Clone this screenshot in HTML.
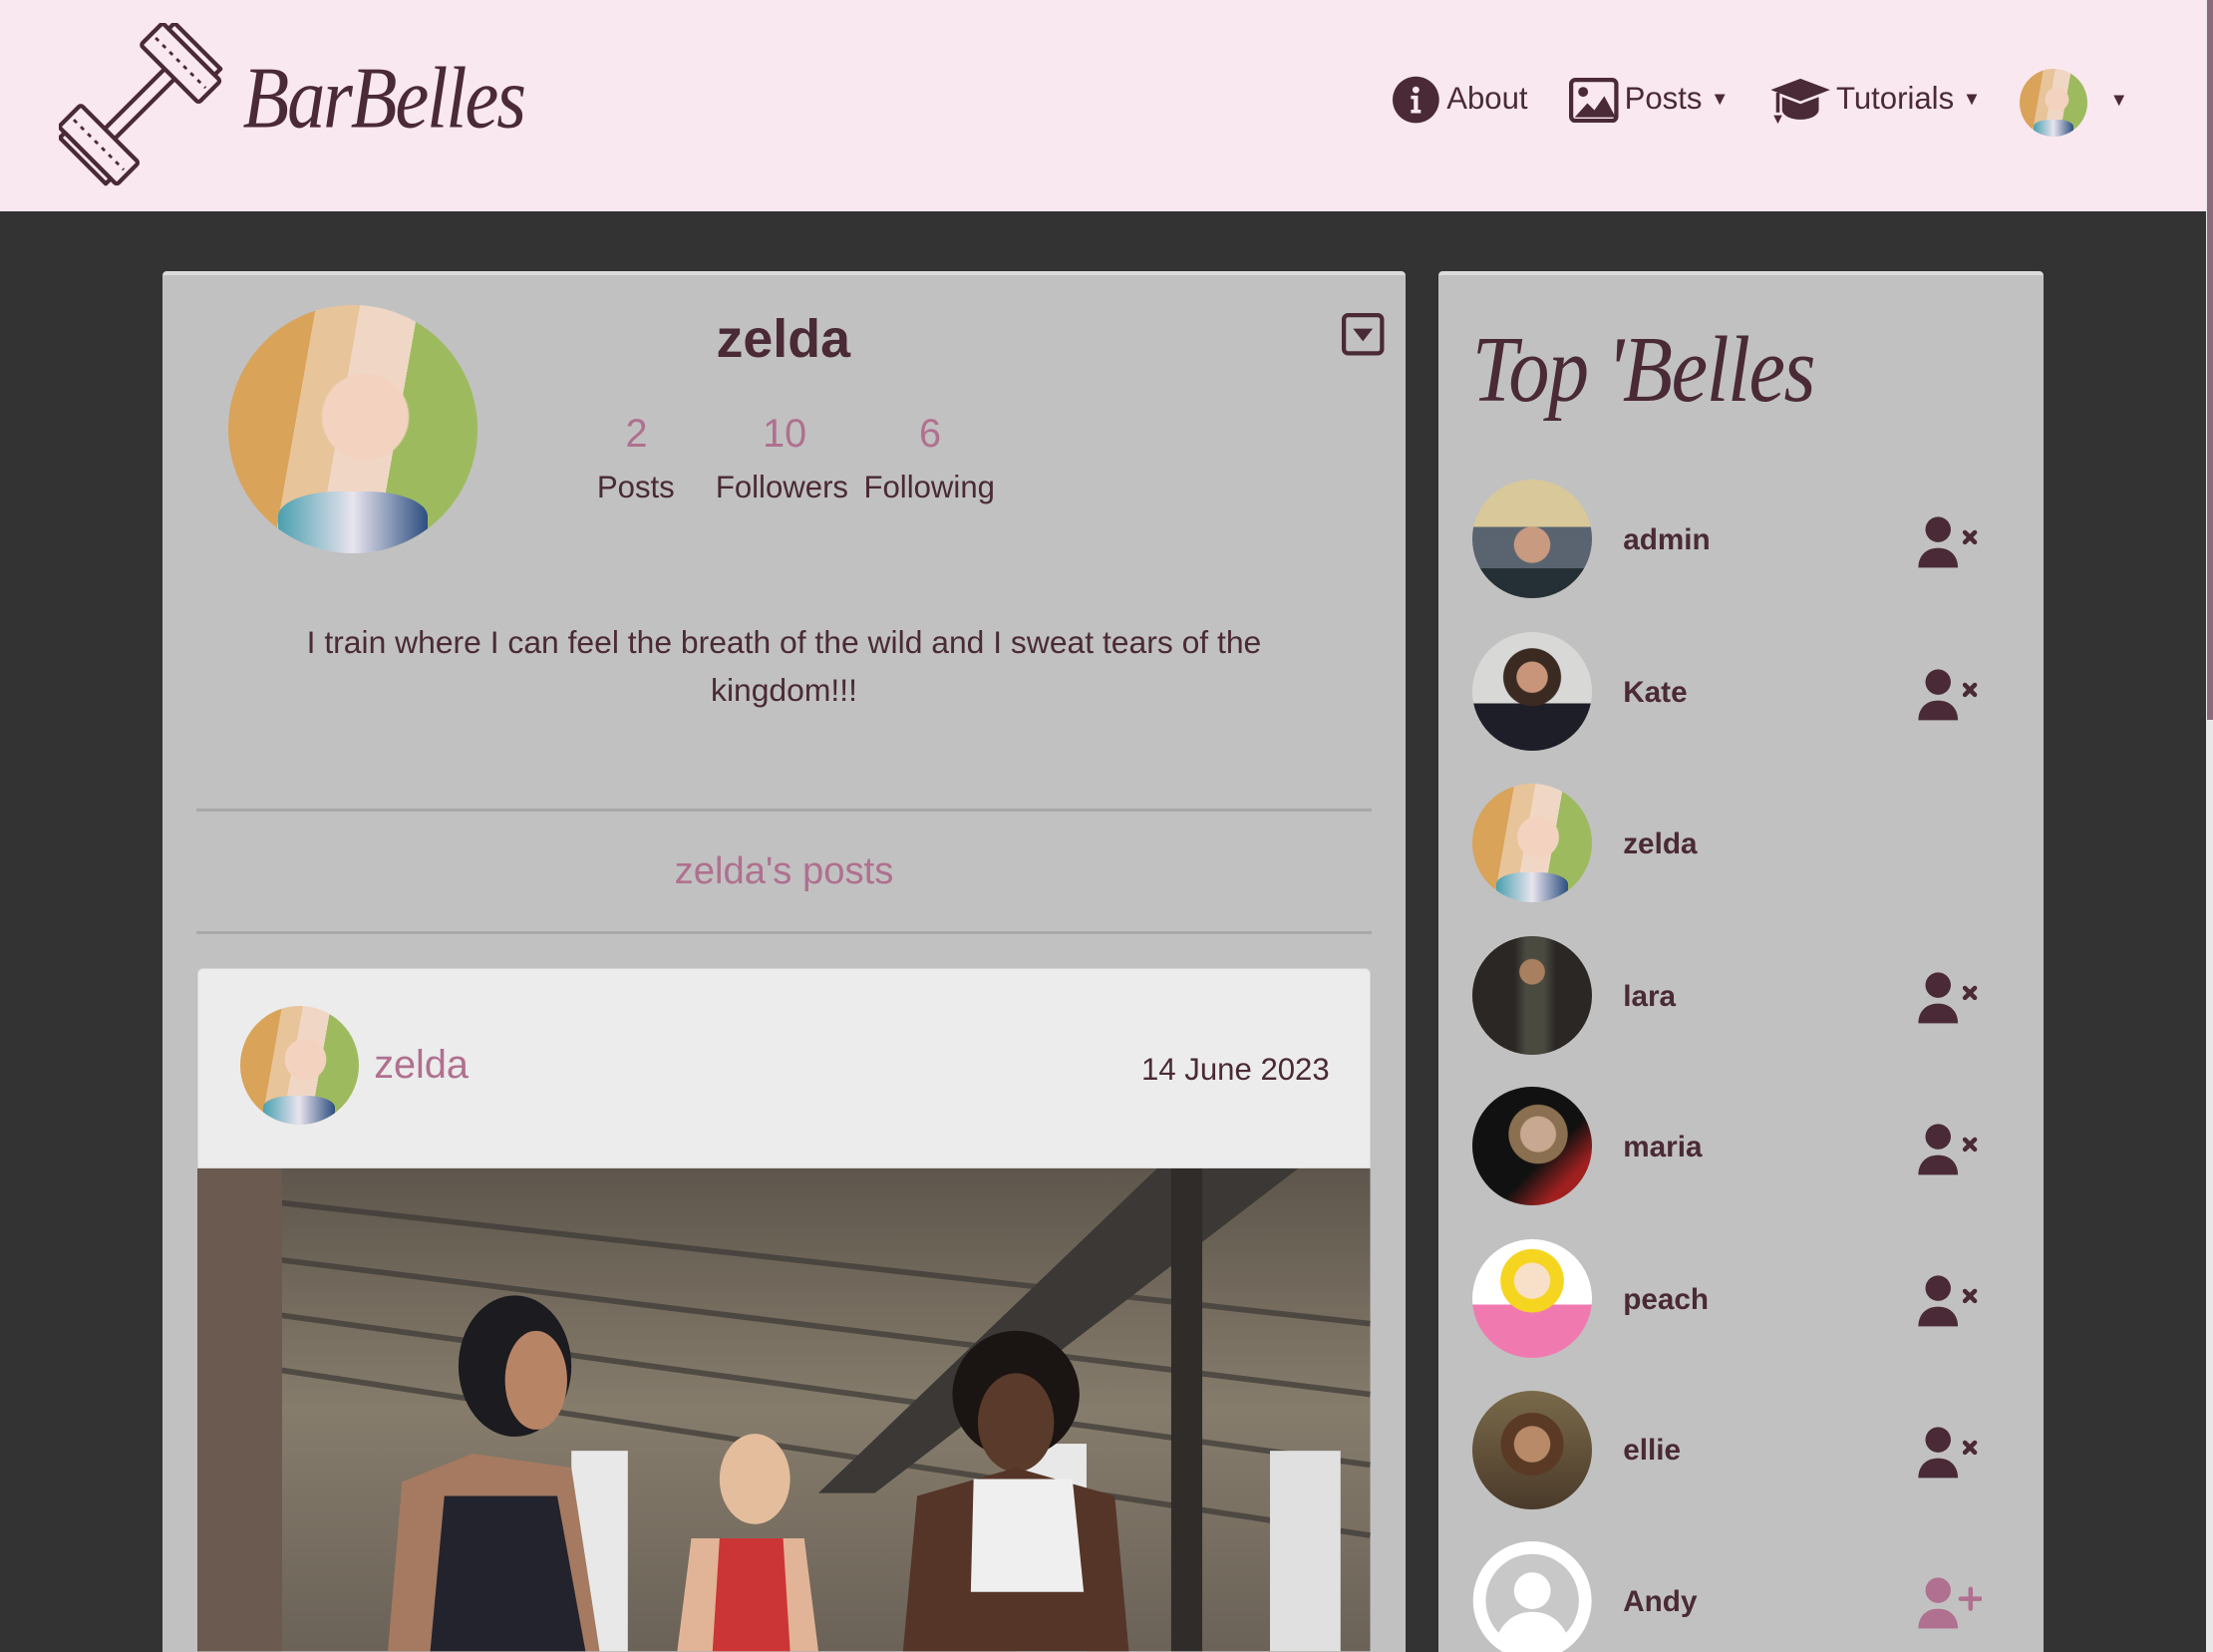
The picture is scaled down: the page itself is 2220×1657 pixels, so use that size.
<!DOCTYPE html>
<html><head><meta charset="utf-8"><style>
html,body{margin:0;padding:0;background:#333;overflow:hidden}
#w{zoom:1.41582;width:1568px;height:1170px;position:relative;background:#333;font-family:"Liberation Sans",sans-serif;color:#4a2a36;overflow:hidden}
.a{position:absolute}
.hdr{left:0;top:0;width:1563px;height:150px;background:#fae8f0}
.card{background:#c1c1c1;border-top:3px solid #dcdcdc;border-radius:3px}
.av{border-radius:50%;overflow:hidden}
.zel{background:radial-gradient(circle at 55% 45%,#f3d2c0 0 22%,transparent 23%),linear-gradient(100deg,#d9a35a 0 30%,#e8c49a 30% 45%,#f0d7c5 45% 65%,#9dbb5e 65%),#9dbb5e}
.zel::after{content:"";position:absolute;left:20%;right:20%;bottom:0;height:25%;background:linear-gradient(90deg,#4aa0b0,#e8e4ee 50%,#2d4f80);border-radius:40% 40% 0 0}
.nm{font-size:21px;font-weight:bold;left:1150px}
.ic{left:1358px}
</style></head><body><div id="w">
<div class="a hdr"></div>
<div class="a" style="left:1563px;top:0;width:5px;height:1170px;background:#e8e8e8"></div>
<div class="a" style="left:1564px;top:0;width:4px;height:510px;background:#8a6a7a"></div>
<!-- logo -->
<svg class="a" style="left:42px;top:16px" width="116" height="116" viewBox="0 0 116 116" fill="#fae8f0" stroke="#4a2a36" stroke-width="3" stroke-linejoin="round">
<g transform="rotate(45 58 58)">
<rect x="52" y="20" width="10" height="76"/>
<rect x="28" y="6" width="58" height="22" rx="2"/>
<rect x="34" y="0" width="46" height="6"/>
<rect x="28" y="88" width="58" height="22" rx="2"/>
<rect x="34" y="110" width="46" height="5"/>
<line x1="32" y1="17" x2="82" y2="17" stroke-dasharray="3 4" stroke-width="2"/>
<line x1="32" y1="99" x2="82" y2="99" stroke-dasharray="3 4" stroke-width="2"/>
</g></svg>
<div class="a" style="left:172px;top:34px;font-family:'Liberation Serif',serif;font-style:italic;font-size:54px;letter-spacing:-1.5px;transform:scaleY(1.15);transform-origin:left top">BarBelles</div>
<!-- nav -->
<svg class="a" style="left:987px;top:54px" width="33" height="34" viewBox="0 0 33 34"><circle cx="16.5" cy="17" r="16.5" fill="#4a2a36"/><circle cx="16.5" cy="10" r="2.4" fill="#fae8f0"/><path d="M13 14h5v10h2v2.5h-7V24h2v-7.5h-2z" fill="#fae8f0"/></svg>
<div class="a" style="left:1025px;top:57px;font-size:22px">About</div>
<svg class="a" style="left:1112px;top:55px" width="35" height="32" viewBox="0 0 35 32"><rect x="1.5" y="1.5" width="32" height="29" rx="3" fill="none" stroke="#4a2a36" stroke-width="3"/><circle cx="10" cy="10" r="3.5" fill="#4a2a36"/><path d="M4 28l9-10 5 5 7-10 8 15z" fill="#4a2a36"/></svg>
<div class="a" style="left:1151px;top:57px;font-size:22px">Posts <span style="font-size:13px;vertical-align:3px">▼</span></div>
<svg class="a" style="left:1254px;top:54px" width="44" height="34" viewBox="0 0 44 34"><path d="M22 2L1 10l21 8 21-8z" fill="#4a2a36"/><path d="M9 15v9c0 4 6 7 13 7s13-3 13-7v-9l-13 5z" fill="#4a2a36"/><path d="M6 12v14" stroke="#4a2a36" stroke-width="2.5"/><path d="M3 28h6l-3 6z" fill="#4a2a36"/></svg>
<div class="a" style="left:1301px;top:57px;font-size:22px">Tutorials <span style="font-size:13px;vertical-align:3px">▼</span></div>
<div class="a av zel" style="left:1431px;top:49px;width:48px;height:48px"></div>
<div class="a" style="left:1495px;top:63px;font-size:13px">▼</div>
<!-- left card -->
<div class="a card" style="left:115px;top:192px;width:881px;height:990px"></div>
<div class="a av zel" style="left:162px;top:216px;width:176px;height:176px"></div>
<div class="a" style="left:455px;top:218px;width:200px;text-align:center;font-size:38px;font-weight:bold">zelda</div>
<svg class="a" style="left:951px;top:222px" width="30" height="30" viewBox="0 0 30 30"><rect x="1.5" y="1.5" width="27" height="27" rx="3" fill="none" stroke="#4a2a36" stroke-width="3"/><path d="M8 11h14l-7 9z" fill="#4a2a36"/></svg>
<div class="a" style="left:411px;top:292px;width:80px;text-align:center;font-size:28px;color:#b0708f">2</div>
<div class="a" style="left:516px;top:292px;width:80px;text-align:center;font-size:28px;color:#b0708f">10</div>
<div class="a" style="left:619px;top:292px;width:80px;text-align:center;font-size:28px;color:#b0708f">6</div>
<div class="a" style="left:423px;top:333px;font-size:22px">Posts</div>
<div class="a" style="left:507px;top:333px;font-size:22px">Followers</div>
<div class="a" style="left:612px;top:333px;font-size:22px">Following</div>
<div class="a" style="left:140px;top:438px;width:831px;text-align:center;font-size:22.5px;line-height:34px">I train where I can feel the breath of the wild and I sweat tears of the<br>kingdom!!!</div>
<div class="a" style="left:139px;top:573px;width:833px;height:2px;background:#a8a8a8"></div>
<div class="a" style="left:140px;top:602px;width:831px;text-align:center;font-size:27px;color:#b0708f">zelda's posts</div>
<div class="a" style="left:139px;top:660px;width:833px;height:2px;background:#a8a8a8"></div>
<!-- post -->
<div class="a" style="left:140px;top:686px;width:831px;height:142px;background:#ececec;border-radius:4px 4px 0 0;border:1px solid #d6d6d6;box-sizing:border-box"></div>
<div class="a av zel" style="left:170px;top:713px;width:84px;height:84px"></div>
<div class="a" style="left:265px;top:739px;font-size:28px;color:#b0708f">zelda</div>
<div class="a" style="left:700px;top:745px;width:242px;text-align:right;font-size:22px">14 June 2023</div>
<svg class="a" style="left:140px;top:828px" width="831" height="342" viewBox="0 0 831 342">
<defs><linearGradient id="g" x1="0" y1="0" x2="0" y2="1"><stop offset="0" stop-color="#5e564c"/><stop offset=".5" stop-color="#867c6c"/><stop offset="1" stop-color="#6b6258"/></linearGradient></defs>
<rect width="831" height="342" fill="url(#g)"/>
<g stroke="#3b3835" stroke-width="4" opacity=".7"><line x1="20" y1="20" x2="831" y2="110"/><line x1="20" y1="60" x2="831" y2="160"/><line x1="30" y1="100" x2="831" y2="210"/><line x1="40" y1="140" x2="831" y2="260"/></g>
<path d="M680 0L780 0 480 230 440 230z" fill="#3b3835"/>
<rect x="690" y="0" width="22" height="342" fill="#2f2c2a"/>
<rect x="0" y="0" width="60" height="342" fill="#6a5a50"/>
<rect x="265" y="200" width="40" height="142" fill="#e8e8e8"/><rect x="580" y="195" width="50" height="147" fill="#e8e8e8"/><rect x="760" y="200" width="50" height="142" fill="#e0e0e0"/>
<ellipse cx="225" cy="140" rx="40" ry="50" fill="#1c1b1f"/><path d="M135 342l10-120 50-20 70 10 20 130z" fill="#a57a60"/><path d="M165 342l10-110h80l20 110z" fill="#23232e"/><ellipse cx="240" cy="150" rx="22" ry="35" fill="#b88466"/>
<ellipse cx="395" cy="220" rx="25" ry="32" fill="#e3bd9c"/><path d="M340 342l10-80h80l10 80z" fill="#e2b497"/><path d="M365 342l5-80h45l5 80z" fill="#cc3535"/>
<ellipse cx="580" cy="160" rx="45" ry="45" fill="#1a1412"/><ellipse cx="580" cy="180" rx="27" ry="35" fill="#5a3a2a"/><path d="M500 342l10-110 70-20 70 20 10 110z" fill="#553528"/><path d="M550 220h70l8 80h-80z" fill="#efefef"/>
</svg>
<!-- right card -->
<div class="a card" style="left:1019px;top:192px;width:429px;height:990px"></div>
<div class="a" style="left:1043px;top:224px;font-family:'Liberation Serif',serif;font-style:italic;font-size:58px;letter-spacing:-1px;transform:scaleY(1.15);transform-origin:left top">Top 'Belles</div>
<div class="a av" style="left:1043px;top:340px;width:85px;height:84px;background:radial-gradient(circle at 50% 55%,#c89a80 0 20%,transparent 21%),linear-gradient(180deg,#d9c89a 0 40%,#5a6470 40% 75%,#243035 75%)"></div>
<div class="a nm" style="top:371px">admin</div>
<div class="a av" style="left:1043px;top:448px;width:85px;height:84px;background:radial-gradient(circle at 50% 38%,#c8957a 0 16%,#3a2a22 17% 30%,transparent 31%),linear-gradient(180deg,#d8d8d6 0 60%,#1e1e28 60%)"></div>
<div class="a nm" style="top:479px">Kate</div>
<div class="a av zel" style="left:1043px;top:555px;width:85px;height:84px"></div>
<div class="a nm" style="top:586px">zelda</div>
<div class="a av" style="left:1043px;top:663px;width:85px;height:84px;background:radial-gradient(circle at 50% 30%,#a88060 0 12%,transparent 13%),linear-gradient(90deg,#2a2724 35%,#4a4a40 45% 60%,#2a2724 70%)"></div>
<div class="a nm" style="top:694px">lara</div>
<div class="a av" style="left:1043px;top:770px;width:85px;height:84px;background:radial-gradient(circle at 55% 40%,#c8a890 0 18%,#8a7050 19% 30%,transparent 31%),linear-gradient(135deg,#111 0 60%,#a02020 80%)"></div>
<div class="a nm" style="top:801px">maria</div>
<div class="a av" style="left:1043px;top:878px;width:85px;height:84px;background:radial-gradient(circle at 50% 35%,#f8e0c8 0 18%,#f5d520 19% 32%,transparent 33%),linear-gradient(180deg,#fff 0 55%,#f07ab0 55%)"></div>
<div class="a nm" style="top:909px">peach</div>
<div class="a av" style="left:1043px;top:985px;width:85px;height:84px;background:radial-gradient(circle at 50% 45%,#b88a68 0 20%,#5a3a25 21% 35%,transparent 36%),linear-gradient(180deg,#7a6a4a,#4a3a2a)"></div>
<div class="a nm" style="top:1016px">ellie</div>
<svg class="a" style="left:1043px;top:1092px" width="85" height="84" viewBox="0 0 85 84"><circle cx="42.5" cy="42" r="42" fill="#fff"/><circle cx="42.5" cy="42" r="33" fill="#c8c8c8"/><circle cx="42.5" cy="35" r="13" fill="#fff"/><path d="M18 66c6-12 15-16 24.5-16S61 54 67 66c-7 6-15 9-24.5 9S25 72 18 66z" fill="#fff"/></svg>
<div class="a nm" style="top:1123px">Andy</div>
<!-- icons -->
<svg width="0" height="0" style="position:absolute"><defs>
<g id="ux"><circle cx="15" cy="10" r="9"/><path d="M1 37c0-9 6-14 14-14s14 5 14 14z"/><path d="M34 12l7 7M41 12l-7 7" stroke="#4a2a36" stroke-width="3.2" stroke-linecap="round"/></g>
</defs></svg>
<svg class="a ic" style="top:365px" width="46" height="38" fill="#4a2a36"><use href="#ux"/></svg>
<svg class="a ic" style="top:473px" width="46" height="38" fill="#4a2a36"><use href="#ux"/></svg>
<svg class="a ic" style="top:688px" width="46" height="38" fill="#4a2a36"><use href="#ux"/></svg>
<svg class="a ic" style="top:795px" width="46" height="38" fill="#4a2a36"><use href="#ux"/></svg>
<svg class="a ic" style="top:903px" width="46" height="38" fill="#4a2a36"><use href="#ux"/></svg>
<svg class="a ic" style="top:1010px" width="46" height="38" fill="#4a2a36"><use href="#ux"/></svg>
<svg class="a ic" style="top:1117px" width="46" height="38" fill="#b0708f"><circle cx="15" cy="10" r="9"/><path d="M1 37c0-9 6-14 14-14s14 5 14 14z"/><path d="M38 9v14M31 16h14" stroke="#b0708f" stroke-width="3.2" stroke-linecap="round"/></svg>
</div></body></html>
